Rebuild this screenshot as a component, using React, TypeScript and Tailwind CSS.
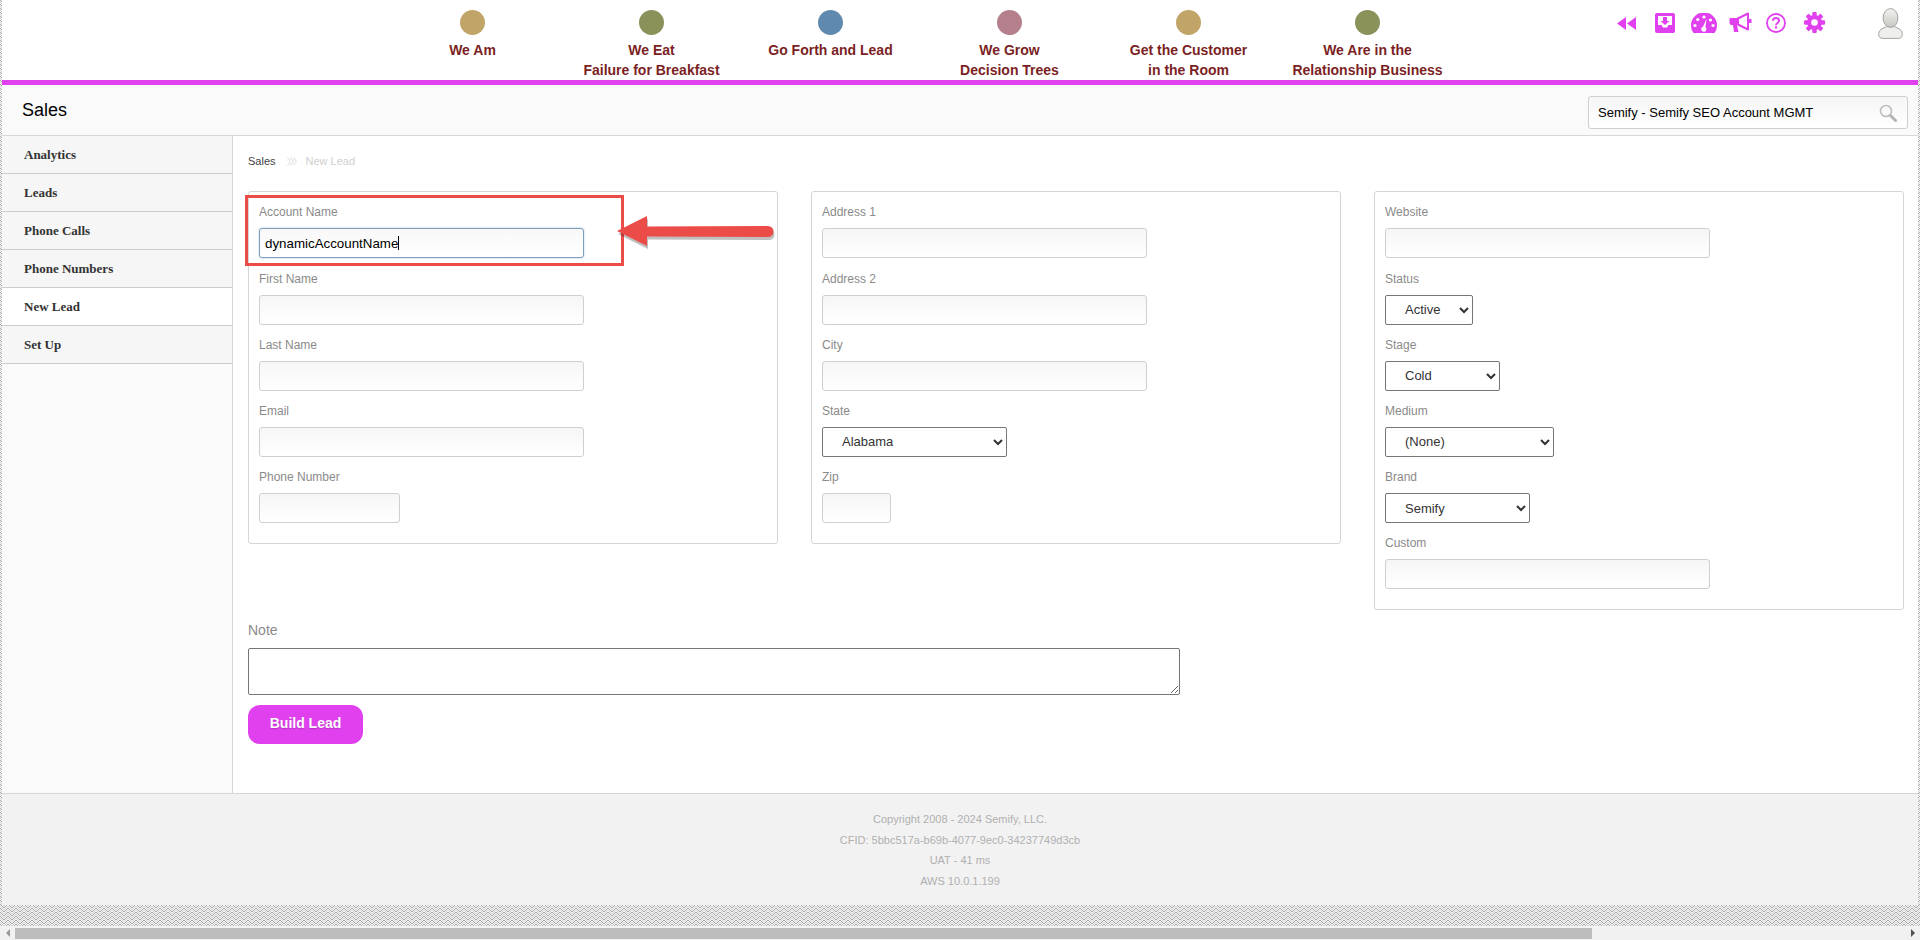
const navItems: { color: string; lines: string[] }[] = [
  { color: "bg-[#c0a468]", lines: ["We Am"] },
  { color: "bg-[#8a9159]", lines: ["We Eat", "Failure for Breakfast"] },
  { color: "bg-[#6089b0]", lines: ["Go Forth and Lead"] },
  { color: "bg-[#b57f8b]", lines: ["We Grow", "Decision Trees"] },
  { color: "bg-[#c0a468]", lines: ["Get the Customer", "in the Room"] },
  { color: "bg-[#8a9159]", lines: ["We Are in the", "Relationship Business"] },
];

const sideItems = ["Analytics", "Leads", "Phone Calls", "Phone Numbers", "New Lead", "Set Up"];

const footerLines = [
  "Copyright 2008 - 2024 Semify, LLC.",
  "CFID: 5bbc517a-b69b-4077-9ec0-34237749d3cb",
  "UAT - 41 ms",
  "AWS 10.0.1.199",
];

function RewindIcon() {
  return (
    <svg width="19" height="13" viewBox="0 0 19 13" className="fill-[#e040ee]">
      <path d="M0 6.500 9 0v13zM10 6.500 19 0v13z" />
    </svg>
  );
}

function InboxIcon() {
  return (
    <svg width="20" height="20" viewBox="0 0 20 20">
      <rect width="20" height="20" rx="2" fill="#e040ee" />
      <path d="M3 3h14v9h-3.500l-1.500 2.500H8L6.500 12H3z" fill="#fff" />
      <path d="M8 4h4v4h2.500L10 12 5.500 8H8z" fill="#e040ee" />
    </svg>
  );
}

function GaugeIcon() {
  return (
    <svg width="26" height="20" viewBox="0 0 26 20">
      <path d="M2.500 20A13 13 0 1 1 23.500 20z" fill="#e040ee" />
      <circle cx="13" cy="4" r="1.600" fill="#fff" />
      <circle cx="6.800" cy="6.500" r="1.600" fill="#fff" />
      <circle cx="4" cy="12.500" r="1.600" fill="#fff" />
      <circle cx="22" cy="12.500" r="1.600" fill="#fff" />
      <circle cx="19.500" cy="7" r="1.600" fill="#fff" />
      <path d="M15.600 5.500 14.400 14.200a2.600 2.600 0 1 1-2.400-.4z" fill="#fff" />
    </svg>
  );
}

function MegaphoneIcon() {
  return (
    <svg width="23" height="21" viewBox="0 0 23 21">
      <path d="M1 6h8v7H8l1.500 7H5L4 13H2.500A2 2 0 0 1 .5 11V8A2 2 0 0 1 1 6z" fill="#e040ee" />
      <path d="M9 6.500 19 1.500v16L9 12.500z" fill="#fff" stroke="#e040ee" strokeWidth="2" strokeLinejoin="round" />
      <path d="M20 7h2.500v4H20z" fill="#e040ee" />
    </svg>
  );
}

function HelpIcon() {
  return (
    <svg width="20" height="20" viewBox="0 0 20 20" fill="none">
      <circle cx="10" cy="10" r="9" stroke="#e040ee" strokeWidth="1.800" />
      <path d="M6.900 7.700C7 5.800 8.300 5 10 5c1.800 0 3.100 1 3.100 2.600 0 2.300-3.100 2.400-3.100 4.700" stroke="#e040ee" strokeWidth="2" />
      <rect x="8.900" y="13.300" width="2.200" height="2.200" fill="#e040ee" />
    </svg>
  );
}

function GearIcon() {
  return (
    <svg width="21" height="21" viewBox="0 0 21 21">
      <g fill="#e040ee">
        <circle cx="10.500" cy="10.500" r="7.500" />
        <rect x="8.300" y="0" width="4.400" height="21" rx="1" />
        <rect x="8.300" y="0" width="4.400" height="21" rx="1" transform="rotate(45 10.500 10.500)" />
        <rect x="8.300" y="0" width="4.400" height="21" rx="1" transform="rotate(90 10.500 10.500)" />
        <rect x="8.300" y="0" width="4.400" height="21" rx="1" transform="rotate(135 10.500 10.500)" />
      </g>
      <circle cx="10.500" cy="10.500" r="3.300" fill="#fff" />
    </svg>
  );
}

function Avatar() {
  return (
    <svg width="25" height="31" viewBox="0 0 25 31">
      <defs>
        <linearGradient id="avatarFill" x1="0" y1="0" x2="0" y2="1">
          <stop offset="0" stopColor="#f2f2f0" />
          <stop offset="1" stopColor="#c6c6c2" />
        </linearGradient>
      </defs>
      <path
        d="M.7 26.500c0-3.500 1.600-5 4.300-6.200l3.500-1.800h8l3.500 1.800c2.700 1.200 4.300 2.700 4.300 6.200 0 2.400-1.300 3.900-4.300 3.900H5c-3 0-4.300-1.500-4.300-3.900z"
        fill="#efefed"
        stroke="#a3a3a0"
      />
      <ellipse cx="12.500" cy="10" rx="7.400" ry="9.400" fill="url(#avatarFill)" stroke="#a3a3a0" />
    </svg>
  );
}

function SearchIcon() {
  return (
    <svg width="18" height="18" viewBox="0 0 18 18" fill="none">
      <circle cx="7" cy="7" r="5.500" stroke="#bdbdbd" strokeWidth="1.600" />
      <path d="m11.500 11.500 5 5" stroke="#b5b5b5" strokeWidth="3" strokeLinecap="round" />
    </svg>
  );
}

function Field({ label, className }: { label: string; className: string }) {
  return (
    <div className="mb-[12.2px]">
      <label className="block text-xs leading-4 mb-2 text-[#8a8a8a]">{label}</label>
      <input
        readOnly
        className={`block h-[30px] border border-[#cfcfcf] rounded-[3px] bg-gradient-to-b from-[#f6f6f6] to-white ${className}`}
      />
    </div>
  );
}

function SelectField({ label, value, className }: { label: string; value: string; className: string }) {
  return (
    <div className="mb-[12.2px]">
      <label className="block text-xs leading-4 mb-2 text-[#8a8a8a]">{label}</label>
      <select
        defaultValue={value}
        className={`block h-[30px] border border-[#767676] rounded-[2px] bg-white pl-[15px] text-[13px] text-[#333] ${className}`}
      >
        <option>{value}</option>
      </select>
    </div>
  );
}

export default function App() {
  return (
    <div className="relative h-[940px] w-[1920px] overflow-hidden flex flex-col font-['Liberation_Sans',Arial,sans-serif] bg-[#f5f5f5] bg-[url('data:image/svg+xml,%3Csvg%20xmlns=%22http://www.w3.org/2000/svg%22%20width=%228%22%20height=%224%22%3E%3Cpath%20d=%22M0%200h1v1H0zM1%201h1v1H1zM2%202h1v1H2zM3%203h1v1H3zM4%203h1v1H4zM5%202h1v1H5zM6%201h1v1H6zM7%200h1v1H7z%22%20fill=%22%23a6a6a6%22/%3E%3Cpath%20d=%22M0%202h1v1H0zM1%203h1v1H1zM2%200h1v1H2zM3%201h1v1H3zM4%201h1v1H4zM5%200h1v1H5zM6%203h1v1H6zM7%202h1v1H7z%22%20fill=%22%23d4d4d4%22/%3E%3C/svg%3E')]">
      <div className="h-[905px] mx-[2px] flex flex-col bg-white">
        {/* Top nav */}
        <header className="h-[80px] flex shrink-0 pl-[381px]">
          <nav className="flex">
            {navItems.map((item) => (
              <div key={item.lines[0]} className="w-[179px] flex flex-col items-center pt-[10px]">
                <span className={`w-[25px] h-[25px] rounded-full ${item.color}`} />
                <div className="mt-[5px] text-sm leading-5 font-bold text-[#7b1f24] text-center whitespace-nowrap">
                  {item.lines.map((line) => (
                    <div key={line}>{line}</div>
                  ))}
                </div>
              </div>
            ))}
          </nav>
          <div className="flex items-start ml-[159.500px]">
            <span className="mt-[17px]"><RewindIcon /></span>
            <span className="mt-[13px] ml-[19px]"><InboxIcon /></span>
            <span className="mt-[13px] ml-[16px]"><GaugeIcon /></span>
            <span className="mt-[12px] ml-[12px]"><MegaphoneIcon /></span>
            <span className="mt-[13px] ml-[14px]"><HelpIcon /></span>
            <span className="mt-[12px] ml-[18px]"><GearIcon /></span>
            <span className="mt-[8px] ml-[53px]"><Avatar /></span>
          </div>
        </header>
        <div className="h-[5px] shrink-0 bg-[#e040ee]" />

        {/* Title bar */}
        <div className="h-[51px] shrink-0 flex items-center justify-between pl-[20px] pr-[10px] bg-[#fafafa] border-b border-[#d8d8d8]">
          <h1 className="text-lg text-black">Sales</h1>
          <div className="w-[320px] h-[33px] self-end mb-[6px] flex items-center pl-[9px] pr-[10px] bg-gradient-to-b from-[#f6f6f6] to-white border border-[#cfcfcf] rounded-[3px]">
            <input
              readOnly
              value="Semify - Semify SEO Account MGMT"
              className="flex-1 text-[13px] text-black outline-none bg-transparent"
            />
            <SearchIcon />
          </div>
        </div>

        <div className="flex flex-1 min-h-0">
          {/* Sidebar */}
          <aside className="w-[231px] shrink-0 bg-[#fafafa] border-r border-[#d5d5d5] font-['Liberation_Serif',serif]">
            {sideItems.map((item) => (
              <div
                key={item}
                className={`h-[38px] flex items-center pl-[22px] text-[13px] font-bold text-[#333] border-b border-[#cccccc] ${
                  item === "New Lead" ? "bg-white" : "bg-[#f6f6f6]"
                }`}
              >
                {item}
              </div>
            ))}
          </aside>

          {/* Form */}
          <main className="relative flex-1 pl-[15px] bg-white">
            <div className="flex items-center h-[14px] mt-[18px] text-[11px] leading-[14px] text-[#444]">
              <span>Sales</span>
              <svg width="10" height="9" viewBox="0 0 10 9" fill="none" className="ml-[11px] stroke-[#d8d8d8]">
                <path d="m.5.5 3 4-3 4M3.500.5l3 4-3 4M6.500.5l3 4-3 4" />
              </svg>
              <span className="ml-[9px] text-[#cfcfcf]">New Lead</span>
            </div>

            <div className="flex items-start gap-[33px] mt-[23px]">
              <section className="w-[530px] border border-[#d5d5d5] rounded-[3px] pt-[12.400px] px-[10px] pb-[7.500px]">
                <div className="mb-[12.200px]">
                  <label className="block text-xs leading-4 mb-2 text-[#8a8a8a]">Account Name</label>
                  <div className="relative w-[325px]">
                    <input
                      readOnly
                      value="dynamicAccountName"
                      className="block w-full h-[30px] pl-[5px] text-[13.33px] text-black border border-[#7f9db9] rounded-[3px] bg-gradient-to-b from-[#f8f8f8] to-white shadow-[0_0_2px_#9ec1e0] outline-none"
                    />
                    <span className="absolute left-[139px] top-[8px] w-px h-[14px] bg-black" />
                  </div>
                </div>
                <Field label="First Name" className="w-[325px]" />
                <Field label="Last Name" className="w-[325px]" />
                <Field label="Email" className="w-[325px]" />
                <Field label="Phone Number" className="w-[141px]" />
              </section>

              <section className="w-[530px] border border-[#d5d5d5] rounded-[3px] pt-[12.400px] px-[10px] pb-[7.500px]">
                <Field label="Address 1" className="w-[325px]" />
                <Field label="Address 2" className="w-[325px]" />
                <Field label="City" className="w-[325px]" />
                <SelectField label="State" value="Alabama" className="w-[185px]" />
                <Field label="Zip" className="w-[69px]" />
              </section>

              <section className="w-[530px] border border-[#d5d5d5] rounded-[3px] pt-[12.400px] px-[10px] pb-[7.500px]">
                <Field label="Website" className="w-[325px]" />
                <SelectField label="Status" value="Active" className="w-[88px]" />
                <SelectField label="Stage" value="Cold" className="w-[115px]" />
                <SelectField label="Medium" value="(None)" className="w-[169px]" />
                <SelectField label="Brand" value="Semify" className="w-[145px]" />
                <Field label="Custom" className="w-[325px]" />
              </section>
            </div>

            <label className="block mt-[12px] text-sm leading-4 text-[#8a8a8a]">Note</label>
            <textarea
              readOnly
              className="block mt-[10px] w-[932px] h-[47px] border border-[#767676] rounded-[2px] bg-white"
            />
            <button className="block mt-[10px] w-[115px] h-[39px] pb-[3px] rounded-xl bg-[#e040ee] text-sm font-bold text-white [text-shadow:0_1px_1px_rgba(0,0,0,0.2)]">
              Build Lead
            </button>

            {/* Annotation over the first field */}
            <div className="absolute left-[12px] top-[59px] w-[379px] h-[71px] border-[3px] border-[#ec4c47]" />
            <svg width="160" height="34" viewBox="0 0 160 34" className="absolute left-[384px] top-[79px] overflow-visible">
              <path
                d="M0 16 30 1v10.500L151 11a5.500 5.500 0 0 1 0 11L30 21.500V31z"
                fill="#000"
                opacity="0.25"
                transform="translate(1 3)"
              />
              <path d="M0 16 30 1v10.500L151 11a5.500 5.500 0 0 1 0 11L30 21.500V31z" fill="#ec4c47" />
            </svg>
          </main>
        </div>

        {/* Footer */}
        <footer className="h-[112px] shrink-0 pt-[15px] bg-[#f2f2f2] border-t border-[#d5d5d5] text-center text-[11px] leading-[20.670px] text-[#b0b0b0]">
          {footerLines.map((line) => (
            <div key={line}>{line}</div>
          ))}
        </footer>
      </div>

      {/* Page scrollbar */}
      <div className="mt-[21px] h-[14px] flex items-center bg-[#f1f1f1]">
        <div className="w-[15px] flex justify-center">
          <span className="w-0 h-0 border-y-[4px] border-y-transparent border-r-[4px] border-r-[#999]" />
        </div>
        <div className="w-[1577px] h-[11px] bg-[#bdbdbd]" />
        <div className="flex-1" />
        <div className="w-[15px] flex justify-center">
          <span className="w-0 h-0 border-y-[4px] border-y-transparent border-l-[4px] border-l-[#505050]" />
        </div>
      </div>
    </div>
  );
}
